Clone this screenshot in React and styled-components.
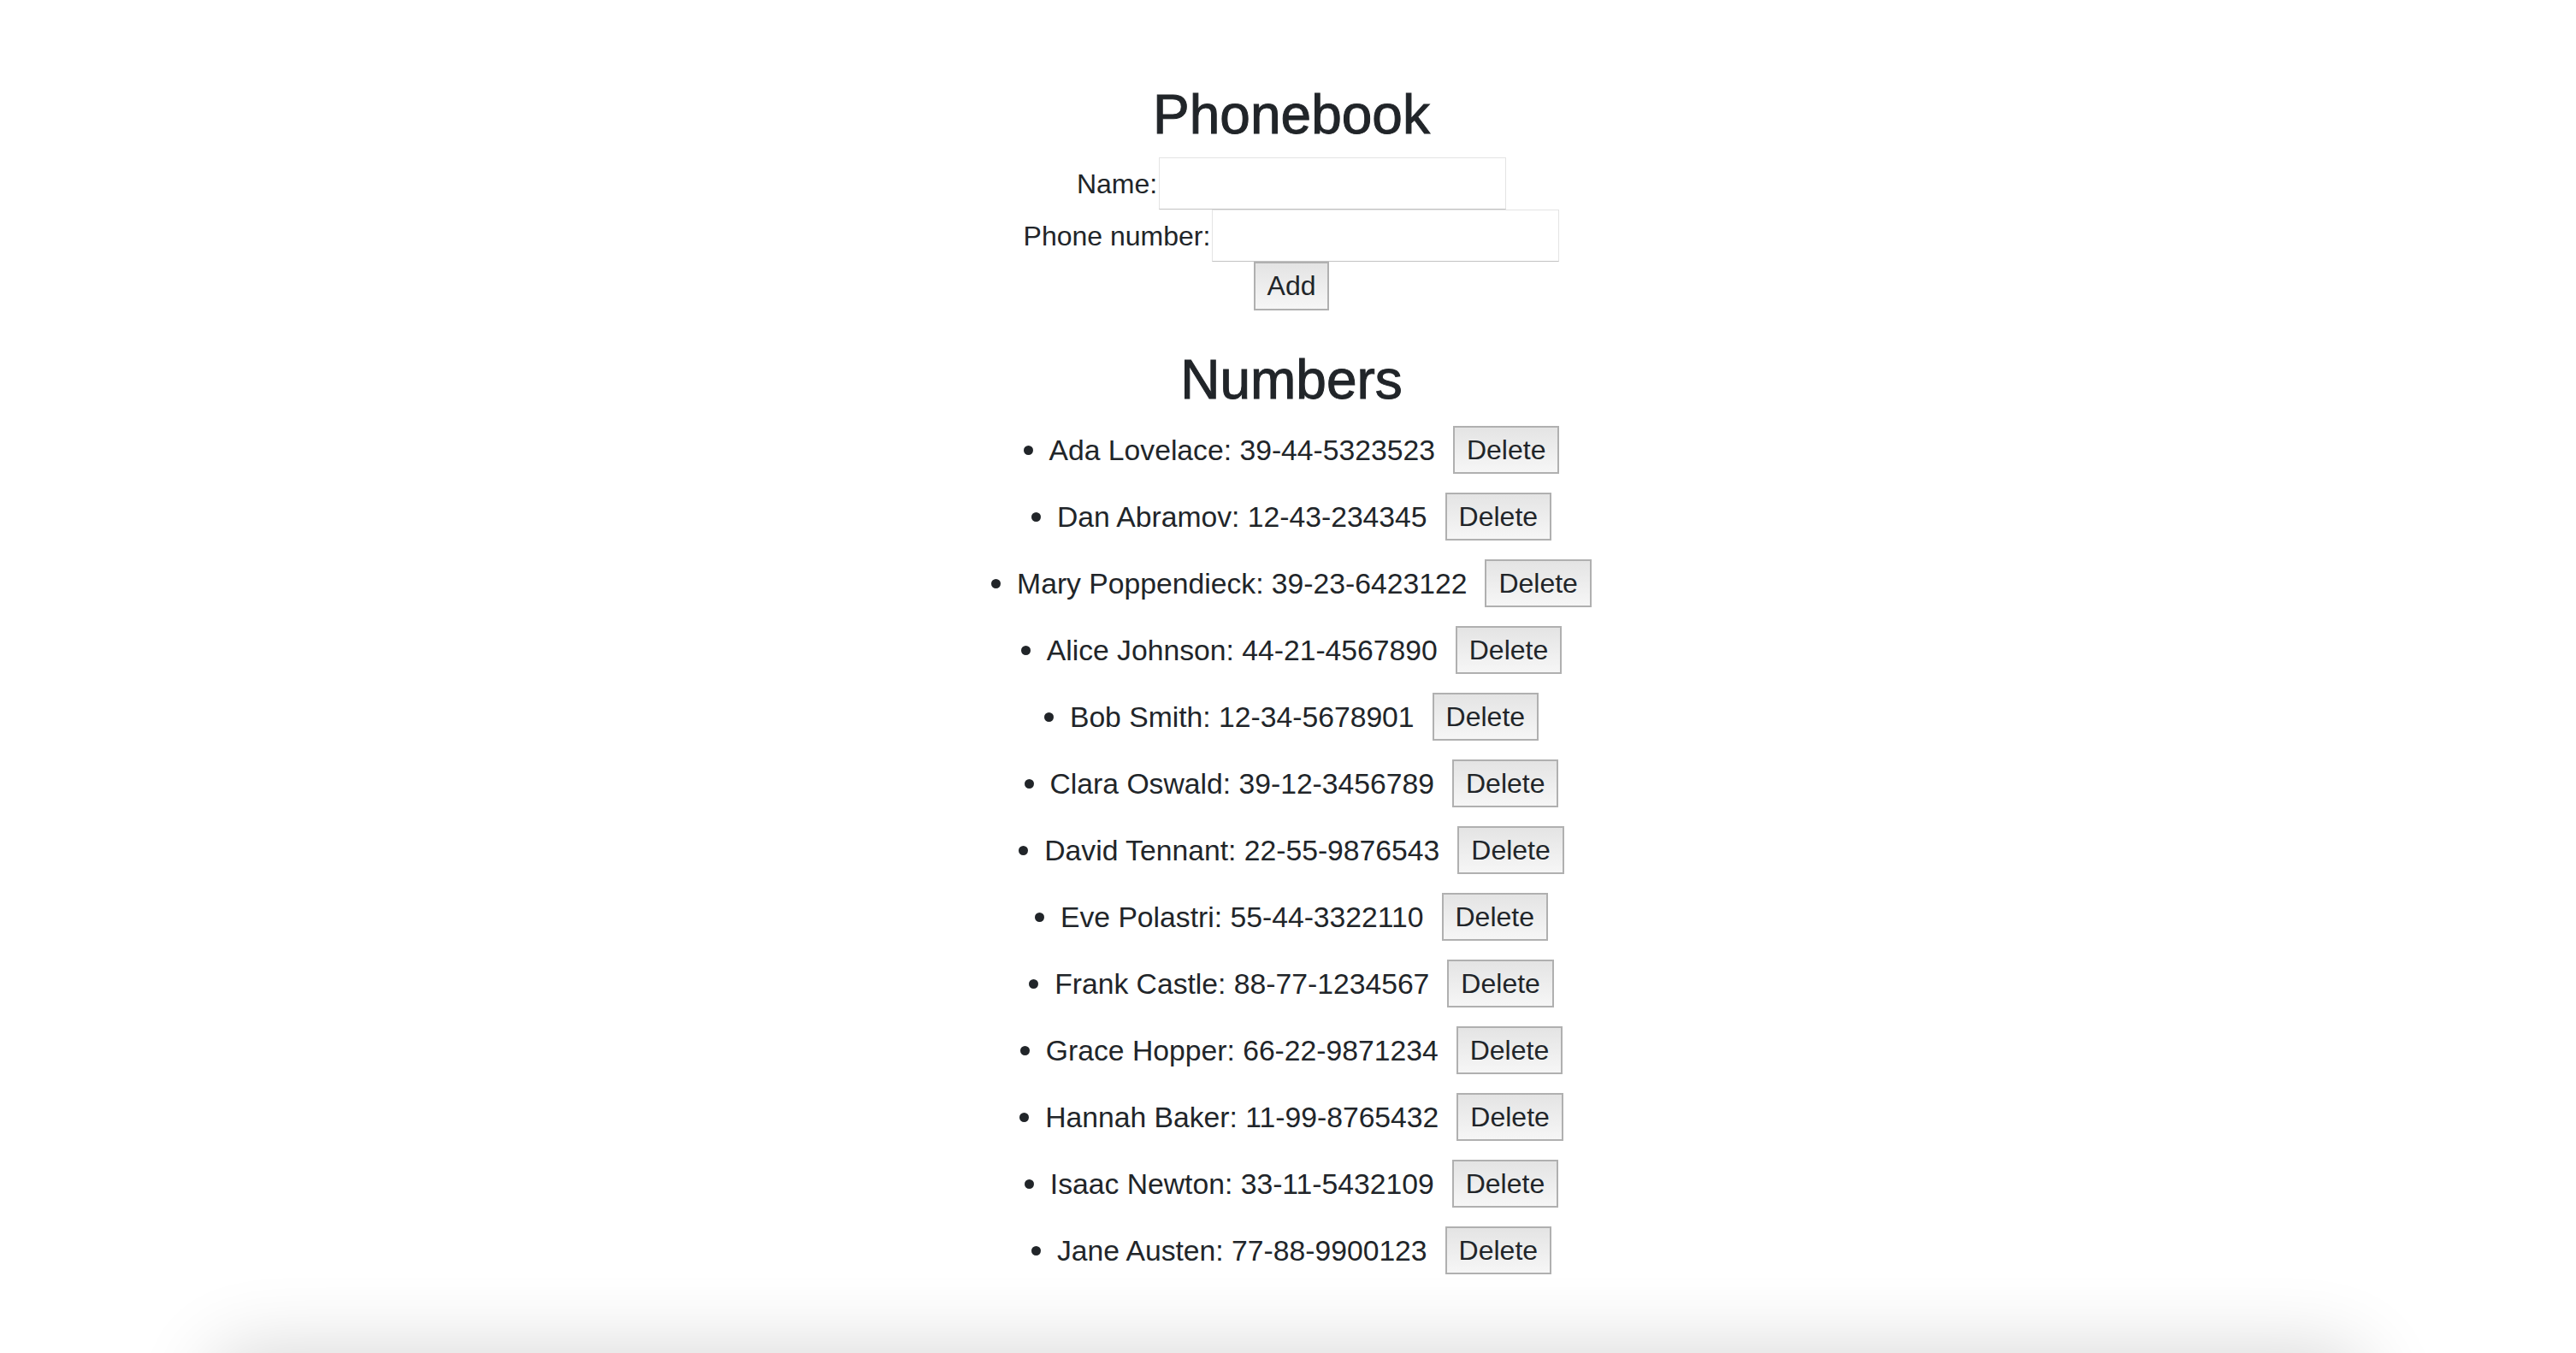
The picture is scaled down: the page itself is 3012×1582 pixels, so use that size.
import styled, { createGlobalStyle } from "styled-components";

const GlobalStyle = createGlobalStyle`
  body {
    margin: 0;
    background: #fff;
    font-family: "Liberation Sans", Arial, Helvetica, sans-serif;
    color: #212529;
  }
`;

const persons = [
  { id: 1, name: "Ada Lovelace", number: "39-44-5323523" },
  { id: 2, name: "Dan Abramov", number: "12-43-234345" },
  { id: 3, name: "Mary Poppendieck", number: "39-23-6423122" },
  { id: 4, name: "Alice Johnson", number: "44-21-4567890" },
  { id: 5, name: "Bob Smith", number: "12-34-5678901" },
  { id: 6, name: "Clara Oswald", number: "39-12-3456789" },
  { id: 7, name: "David Tennant", number: "22-55-9876543" },
  { id: 8, name: "Eve Polastri", number: "55-44-3322110" },
  { id: 9, name: "Frank Castle", number: "88-77-1234567" },
  { id: 10, name: "Grace Hopper", number: "66-22-9871234" },
  { id: 11, name: "Hannah Baker", number: "11-99-8765432" },
  { id: 12, name: "Isaac Newton", number: "33-11-5432109" },
  { id: 13, name: "Jane Austen", number: "77-88-9900123" },
];

const Page = styled.div`
  padding: 97px 0 0 8px;
  text-align: center;
`;

const Heading = styled.h2`
  margin: ${(props) => props.$top || 0}px 0 0;
  font-size: 64px;
  line-height: 74px;
  font-weight: 500;
  -webkit-text-stroke: 1px currentColor;
`;

const Form = styled.form`
  display: flex;
  flex-direction: column;
  align-items: center;
  margin-top: 13px;
`;

const FieldRow = styled.div`
  display: flex;
  align-items: center;
  justify-content: center;
  gap: 2px;
  height: 61px;
`;

const Label = styled.label`
  font-size: 32px;
  padding-top: 1px;
`;

const Input = styled.input`
  box-sizing: border-box;
  width: 406px;
  height: 61px;
  border: 1px solid #e4e4e4;
  border-bottom-color: #c2c2c2;
  background: #fff;
  font: inherit;
  font-size: 32px;
  outline: none;
`;

const Button = styled.button`
  box-sizing: border-box;
  height: ${(props) => props.$height}px;
  margin-left: ${(props) => props.$gap || 0}px;
  padding: 0 14px;
  border: 2px solid #b0b0b0;
  background: linear-gradient(#e4e4e4, #f6f6f6);
  color: #212529;
  font-family: "Liberation Sans", Arial, sans-serif;
  font-size: 32px;
  cursor: pointer;
`;

const List = styled.ul`
  margin: 17px 0 0;
  padding: 0;
  list-style: none;
`;

const Item = styled.li`
  display: flex;
  align-items: center;
  justify-content: center;
  height: 56px;
  margin-bottom: 22px;
  font-size: 33.7px;

  &::before {
    content: "";
    width: 11px;
    height: 11px;
    margin-right: 19px;
    border-radius: 50%;
    background: currentColor;
  }
`;

const BottomSheet = styled.div`
  position: fixed;
  left: 250px;
  right: 250px;
  top: 100%;
  height: 300px;
  border-radius: 40px;
  background: #fff;
  box-shadow: 0 0 90px 4px rgba(0, 0, 0, 0.16);
`;

export default function App() {
  return (
    <>
      <GlobalStyle />
      <Page>
        <Heading>Phonebook</Heading>
        <Form onSubmit={(e) => e.preventDefault()}>
          <FieldRow>
            <Label>Name:</Label>
            <Input />
          </FieldRow>
          <FieldRow>
            <Label>Phone number:</Label>
            <Input />
          </FieldRow>
          <Button type="submit" $height={57}>
            Add
          </Button>
        </Form>
        <Heading $top={44}>Numbers</Heading>
        <List>
          {persons.map((person) => (
            <Item key={person.id}>
              {person.name}: {person.number}
              <Button $height={56} $gap={21}>
                Delete
              </Button>
            </Item>
          ))}
        </List>
      </Page>
      <BottomSheet />
    </>
  );
}
